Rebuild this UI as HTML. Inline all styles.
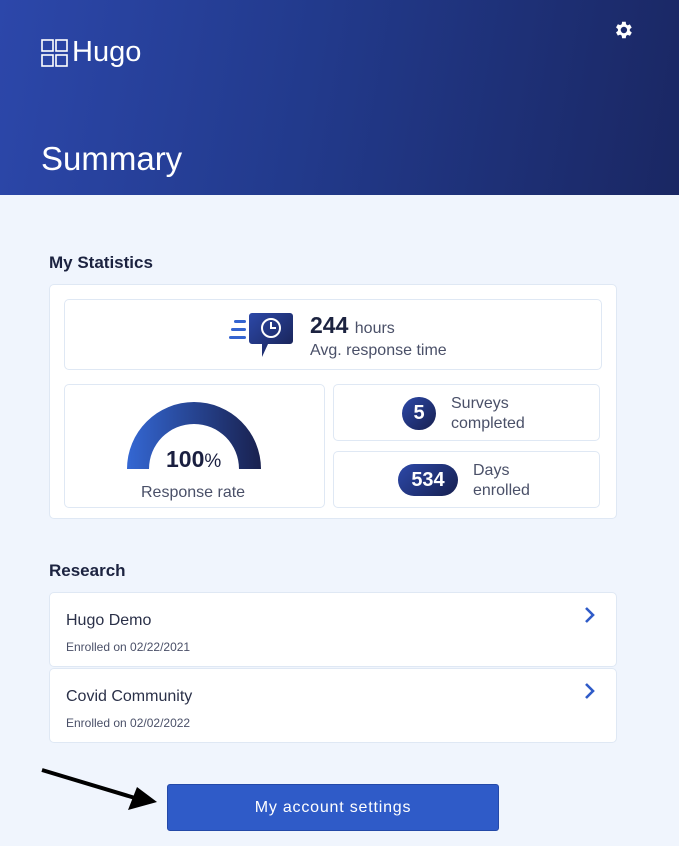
<!DOCTYPE html>
<html><head><meta charset="utf-8"><style>
body{margin:0;width:679px;height:846px;background:#f0f5fd;font-family:"Liberation Sans",sans-serif;position:relative;overflow:hidden;color:#1c2340}
.hdr{position:absolute;left:0;top:0;width:679px;height:195px;background:linear-gradient(100deg,#2c47aa 0%,#223a8c 45%,#1a2763 100%)}
.abs{position:absolute}
.card{position:absolute;background:#fff;border:1px solid #dfe8f4;border-radius:5px;box-sizing:border-box}
.h2{position:absolute;font-size:17px;font-weight:bold;color:#1c2340}
.g{color:#4a5068}
</style></head><body>
<div class="hdr"></div>
<svg class="abs" style="left:41px;top:38px" width="28" height="30" viewBox="0 0 28 30" fill="none" stroke="#fff" stroke-width="1.6">
<rect x="1" y="2" width="11" height="11"/><rect x="15" y="2" width="11" height="11"/><rect x="1" y="17" width="11" height="11"/><rect x="15" y="17" width="11" height="11"/></svg>
<div class="abs" style="left:72px;top:36px;font-size:29px;color:#fff">Hugo</div>
<svg class="abs" style="left:612px;top:19px" width="22" height="22" viewBox="0 0 24 24"><path fill="#fff" d="M19.4 13a7.5 7.5 0 0 0 0-2l2.1-1.6-2-3.5-2.5 1a7 7 0 0 0-1.7-1L15 3h-4l-.4 2.7a7 7 0 0 0-1.7 1l-2.5-1-2 3.5L6.5 11a7.5 7.5 0 0 0 0 2l-2.1 1.6 2 3.5 2.5-1a7 7 0 0 0 1.7 1L11 21h4l.4-2.7a7 7 0 0 0 1.7-1l2.5 1 2-3.5zM13 15.5a3.5 3.5 0 1 1 0-7 3.5 3.5 0 0 1 0 7z"/></svg>
<div class="abs" style="left:41px;top:140px;font-size:33px;color:#fff">Summary</div>

<div class="h2" style="left:49px;top:253px">My Statistics</div>
<div class="card" style="left:49px;top:284px;width:568px;height:235px"></div>
<div class="card" style="left:64px;top:299px;width:538px;height:71px"></div>
<svg class="abs" style="left:228px;top:312px" width="66" height="46" viewBox="0 0 66 46">
<defs><linearGradient id="b" x1="0" y1="0" x2="1" y2="1"><stop offset="0" stop-color="#2c48a8"/><stop offset="1" stop-color="#17204f"/></linearGradient>
<linearGradient id="a" x1="0" x2="1"><stop offset="0" stop-color="#3467d3"/><stop offset="1" stop-color="#19214f"/></linearGradient></defs>
<rect x="6" y="8" width="12" height="3" rx="1.5" fill="#3464d0"/><rect x="3" y="16" width="15" height="3" rx="1.5" fill="#3464d0"/><rect x="1" y="24" width="17" height="3" rx="1.5" fill="#3464d0"/>
<path d="M24 1h38a3 3 0 0 1 3 3v25a3 3 0 0 1-3 3H40l-6 13v-13h-10a3 3 0 0 1-3-3V4a3 3 0 0 1 3-3z" fill="url(#b)"/>
<circle cx="43" cy="16" r="9" fill="none" stroke="#fff" stroke-width="2"/><path d="M43 10v6h5" fill="none" stroke="#fff" stroke-width="2"/></svg>
<div class="abs" style="left:310px;top:312px;font-size:23px;font-weight:bold">244 <span style="font-size:16px;font-weight:normal" class="g">hours</span></div>
<div class="abs g" style="left:310px;top:342px;font-size:16px">Avg. response time</div>

<div class="card" style="left:64px;top:384px;width:261px;height:124px"></div>
<svg class="abs" style="left:124px;top:401px" width="140" height="68" viewBox="0 0 140 68">
<path d="M3 68A67 67 0 0 1 137 68H115A45 45 0 0 0 25 68Z" fill="url(#a)"/></svg>
<div class="abs" style="left:166px;top:446px;font-size:23px;font-weight:bold;color:#1a1f40">100<span style="font-weight:normal;font-size:19px">%</span></div>
<div class="abs g" style="left:141px;top:484px;font-size:16px">Response rate</div>

<div class="card" style="left:333px;top:384px;width:267px;height:57px"></div>
<div class="abs" style="left:402px;top:397px;width:34px;height:33px;border-radius:17px;background:linear-gradient(135deg,#2c48a8,#17204f);color:#fff;font-weight:bold;font-size:20px;text-align:center;line-height:33px">5</div>
<div class="abs g" style="left:451px;top:394px;font-size:16px;line-height:20px">Surveys<br>completed</div>
<div class="card" style="left:333px;top:451px;width:267px;height:57px"></div>
<div class="abs" style="left:398px;top:464px;width:60px;height:32px;border-radius:16px;background:linear-gradient(135deg,#2c48a8,#17204f);color:#fff;font-weight:bold;font-size:20px;text-align:center;line-height:32px">534</div>
<div class="abs g" style="left:473px;top:461px;font-size:16px;line-height:20px">Days<br>enrolled</div>

<div class="h2" style="left:49px;top:561px">Research</div>
<div class="card" style="left:49px;top:592px;width:568px;height:75px"></div>
<div class="abs" style="left:66px;top:612px;font-size:16px;color:#2a3048">Hugo Demo</div>
<div class="abs g" style="left:66px;top:640px;font-size:12px">Enrolled on 02/22/2021</div>
<svg class="abs" style="left:583px;top:606px" width="14" height="18" viewBox="0 0 14 18"><path d="M3 2l7 7-7 7" fill="none" stroke="#2f5bc8" stroke-width="2.6"/></svg>
<div class="card" style="left:49px;top:668px;width:568px;height:75px"></div>
<div class="abs" style="left:66px;top:688px;font-size:16px;color:#2a3048">Covid Community</div>
<div class="abs g" style="left:66px;top:716px;font-size:12px">Enrolled on 02/02/2022</div>
<svg class="abs" style="left:583px;top:682px" width="14" height="18" viewBox="0 0 14 18"><path d="M3 2l7 7-7 7" fill="none" stroke="#2f5bc8" stroke-width="2.6"/></svg>

<svg class="abs" style="left:40px;top:765px" width="125" height="50" viewBox="0 0 125 50"><path d="M2 5L95 33" stroke="#000" stroke-width="4"/><path d="M117 37L88 45L97 22Z" fill="#000"/></svg>
<div class="abs" style="left:167px;top:784px;width:332px;height:47px;background:#2f5bc8;border-radius:3px;border:1px solid #2449a8;box-sizing:border-box;color:#fff;font-size:16px;letter-spacing:0.8px;text-align:center;line-height:45px">My account settings</div>
</body></html>
